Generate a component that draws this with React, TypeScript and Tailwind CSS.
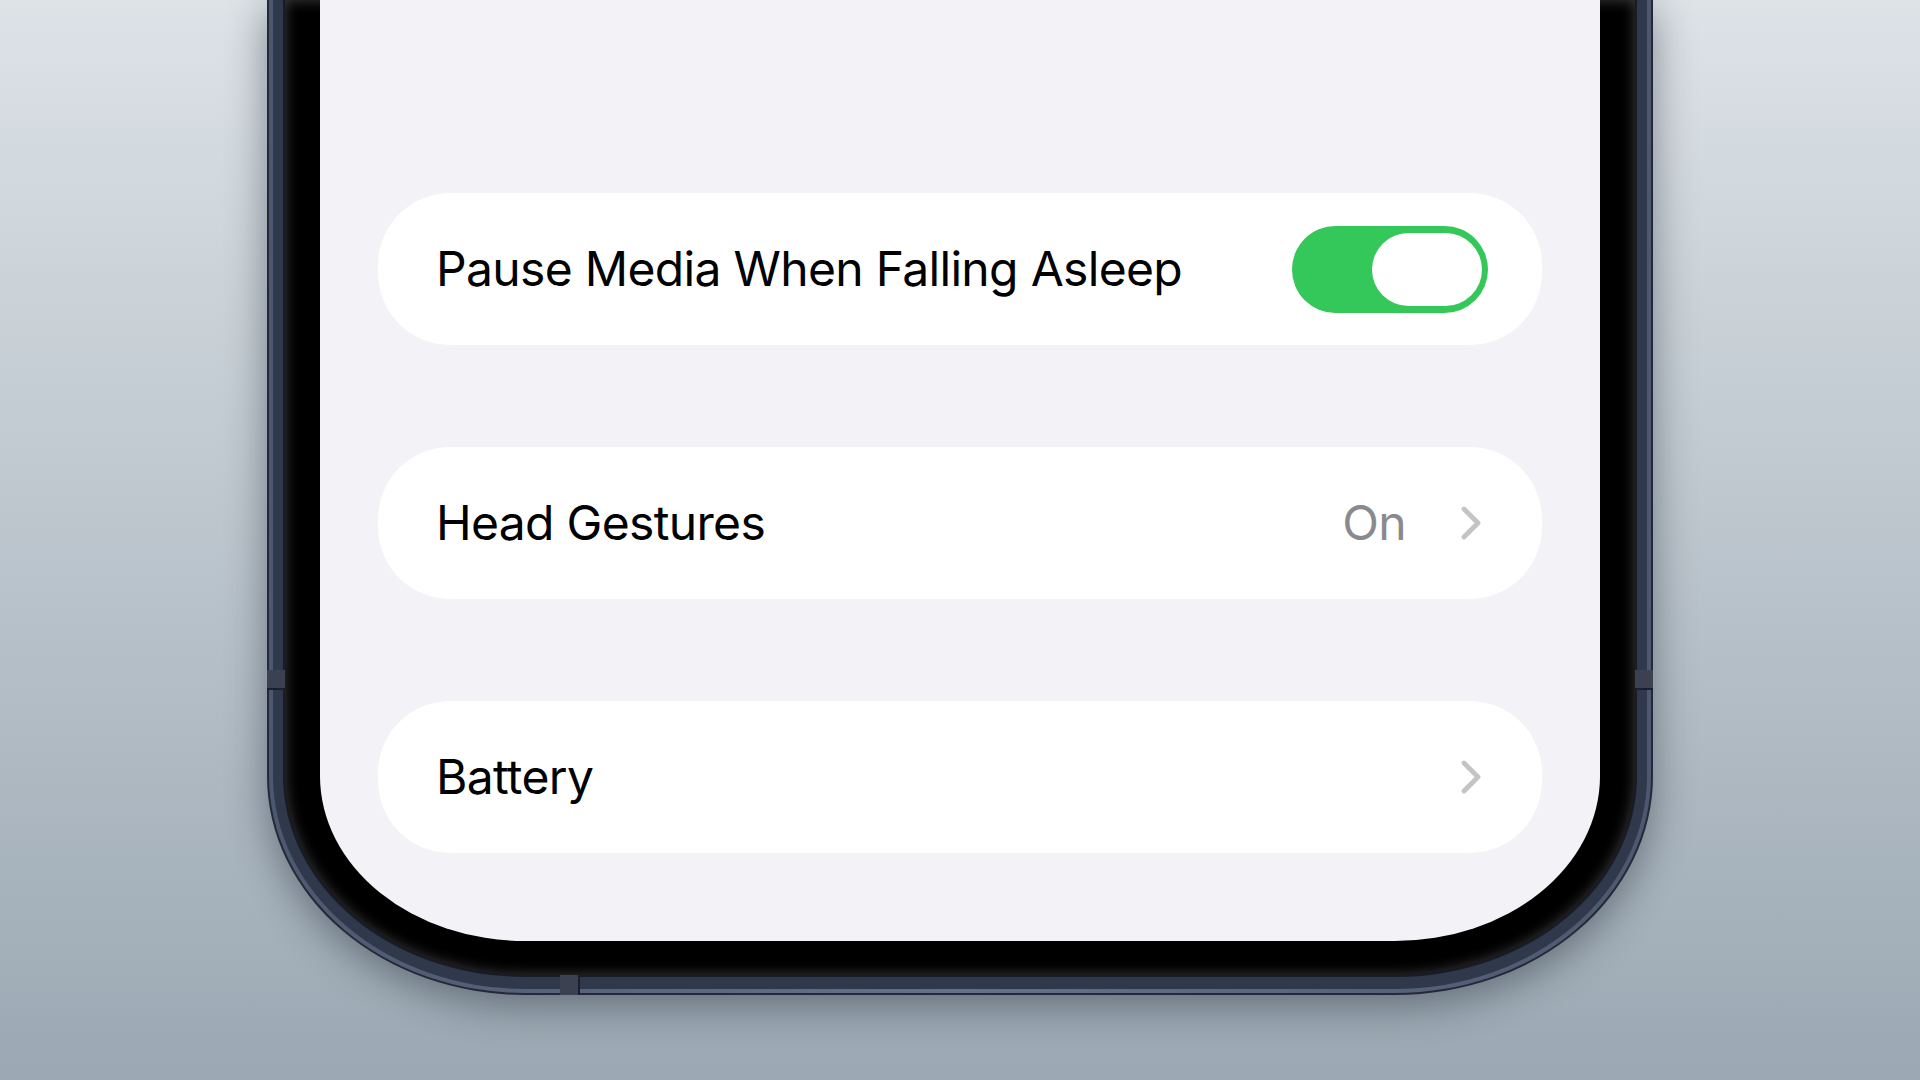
import { ReactNode } from "react"

function Chevron() {
    return (
        <svg width="22" height="36" viewBox="0 0 22 36" fill="none" className="shrink-0">
            <path
                d="M4 4 L18 18 L4 32"
                stroke="#c4c4c7"
                strokeWidth="4.8"
                strokeLinecap="round"
                strokeLinejoin="round"
            />
        </svg>
    )
}

function Toggle() {
    return (
        <div className="ml-auto flex h-[87px] w-[196px] shrink-0 items-center justify-end rounded-full bg-[#34c759] pr-[6px]">
            <div className="h-[73px] w-[110px] rounded-full bg-white" />
        </div>
    )
}

function Row({ children, className }: { children: ReactNode; className?: string }) {
    return (
        <div className={`flex h-[152px] items-center rounded-[72px] bg-white pl-[58px] ${className ?? ""}`}>
            {children}
        </div>
    )
}

function Label({ children }: { children: ReactNode }) {
    return <span className="text-[48px] leading-none tracking-[-0.014em] text-black">{children}</span>
}

export default function App() {
    return (
        <div className="flex h-[1080px] w-full justify-center overflow-hidden bg-gradient-to-b from-[#dde3e7] to-[#9ba8b3] font-['Inter',sans-serif]">
            <div className="relative h-[995px] w-[1386px] shrink-0">
                {/* titanium band, built as nested rings */}
                <div className="flex h-full flex-col rounded-bl-[258px_219px] rounded-br-[258px_219px] bg-[#232938] px-[2px] pb-[2px] shadow-[0_10px_40px_rgba(20,28,38,0.45)]">
                    <div className="flex flex-1 flex-col rounded-bl-[256px_217px] rounded-br-[256px_217px] bg-gradient-to-r from-[#4d586f] via-[#65718a] to-[#4d586f] px-[4px] pb-[4px]">
                        <div className="flex flex-1 flex-col rounded-bl-[252px_213px] rounded-br-[252px_213px] bg-[#30384b] px-[10px] pb-[12px]">
                            <div className="flex flex-1 flex-col rounded-bl-[242px_201px] rounded-br-[242px_201px] bg-[#181c28] px-[2px] pb-[2px]">
                                {/* black bezel */}
                                <div className="flex flex-1 flex-col rounded-bl-[240px_199px] rounded-br-[240px_199px] bg-black px-[35px] pb-[34px] shadow-[inset_0_0_14px_rgba(70,70,70,0.9)]">
                                    {/* screen */}
                                    <div className="flex flex-1 flex-col gap-[102px] rounded-bl-[205px_165px] rounded-br-[205px_165px] bg-[#f2f2f7] px-[58px] pt-[193px]">
                                        <Row className="pr-[54px]">
                                            <Label>Pause Media When Falling Asleep</Label>
                                            <Toggle />
                                        </Row>
                                        <Row className="pr-[60px]">
                                            <Label>Head Gestures</Label>
                                            <span className="ml-auto mr-[54px] text-[48px] leading-none tracking-[-0.014em] text-[#8a8a8e]">On</span>
                                            <Chevron />
                                        </Row>
                                        <Row className="pr-[60px]">
                                            <Label>Battery</Label>
                                            <span className="ml-auto" />
                                            <Chevron />
                                        </Row>
                                    </div>
                                </div>
                            </div>
                        </div>
                    </div>
                </div>

                {/* antenna breaks in the band */}
                <div className="absolute left-0 top-[670px] h-[20px] w-[18px] border-b-2 border-[#1b1f2b] bg-[#3b4150]" />
                <div className="absolute right-0 top-[670px] h-[20px] w-[18px] border-b-2 border-[#1b1f2b] bg-[#3b4150]" />
                <div className="absolute bottom-0 left-[293px] h-[20px] w-[20px] border-r-2 border-[#1b1f2b] bg-[#3b4150]" />
            </div>
        </div>
    )
}
